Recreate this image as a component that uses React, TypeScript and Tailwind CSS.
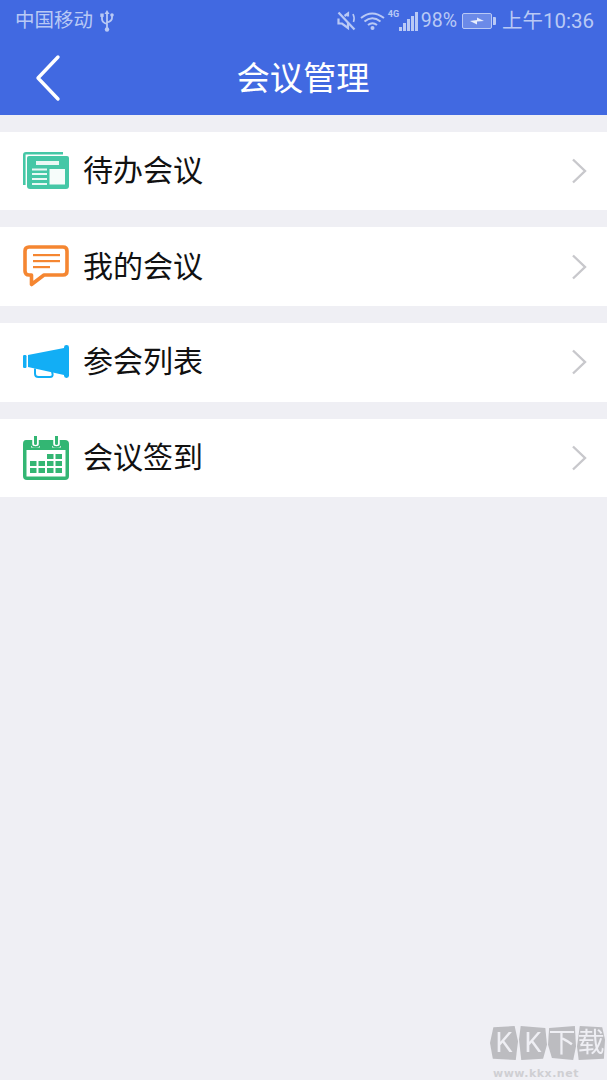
const CJK = "font-['Roboto','Noto_Sans_CJK_SC',sans-serif]";

const NewsIcon = () => (
  <svg width="46" height="38" viewBox="0 0 46 38" className="shrink-0">
    <path d="M0 3Q0 0 3 0H40V2.4H2.6V33H0Z" fill="#45c7a6" />
    <path d="M4 6Q4 4 6 4H44Q46 4 46 6V34Q46 37 43 37H7Q4 37 4 34Z" fill="#45c7a6" />
    <rect x="13" y="9" width="23" height="4" fill="#e9f8f4" />
    <rect x="9" y="16.5" width="15" height="2" fill="#e9f8f4" />
    <rect x="9" y="21" width="15" height="2" fill="#e9f8f4" />
    <rect x="9" y="26" width="15" height="2" fill="#e9f8f4" />
    <rect x="9" y="31" width="15" height="2" fill="#e9f8f4" />
    <rect x="26.5" y="17" width="15.5" height="15.5" fill="#f6fcfa" />
  </svg>
);

const ChatIcon = () => (
  <svg width="46" height="43" viewBox="0 0 46 43" className="shrink-0" fill="none">
    <path
      d="M6 2H40Q44 2 44 6V26Q44 30 40 30H21L8.5 39.5V30H6Q2 30 2 26V6Q2 2 6 2Z"
      stroke="#f58631"
      strokeWidth="3.6"
      strokeLinejoin="round"
    />
    <rect x="10" y="9" width="27" height="2.2" fill="#f58631" />
    <rect x="10" y="15" width="27" height="2.2" fill="#f58631" />
    <rect x="10" y="21" width="17" height="2.2" fill="#f58631" />
  </svg>
);

const HornIcon = () => (
  <svg width="46" height="34" viewBox="0 0 46 34" className="shrink-0">
    <rect x="0" y="10" width="3.5" height="13" rx="1.2" fill="#12aef5" />
    <path d="M5 10L41 3V30L5 22Z" fill="#12aef5" />
    <rect x="41" y="0" width="5" height="33" rx="2.4" fill="#12aef5" />
    <path
      d="M12 23.5V28.5Q12 32 15.5 32H27Q30 32 29.6 29L29 27"
      fill="none"
      stroke="#12aef5"
      strokeWidth="2"
    />
  </svg>
);

const CalendarIcon = () => {
  const cells = [
    [24, 18], [32.5, 18],
    [7, 25], [15.5, 25], [24, 25], [32.5, 25],
    [7, 32], [15.5, 32], [24, 32], [32.5, 32],
  ];
  return (
    <svg width="46" height="44" viewBox="0 0 46 44" className="shrink-0">
      <path d="M3 4H42Q46 4 46 8V40Q46 44 42 44H4Q0 44 0 40V8Q0 4 3 4Z" fill="#33b673" />
      <rect x="3.5" y="14" width="39" height="26.5" fill="#ffffff" />
      <rect x="8" y="4" width="9" height="7.5" fill="#ffffff" />
      <rect x="29" y="4" width="9" height="7.5" fill="#ffffff" />
      <path d="M12.5 0.5V7.5M33.5 0.5V7.5" stroke="#33b673" strokeWidth="3" strokeLinecap="round" />
      <path d="M8.5 4V8Q8.5 11 12.5 11Q16.5 11 16.5 8V4M29.5 4V8Q29.5 11 33.5 11Q37.5 11 37.5 8V4" fill="none" stroke="#33b673" strokeWidth="1.5" />
      {cells.map(([x, y]) => (
        <rect key={`${x}-${y}`} x={x} y={y} width="6.5" height="5" fill="#33b673" />
      ))}
    </svg>
  );
};

const rows = [
  { title: "待办会议", icon: <NewsIcon /> },
  { title: "我的会议", icon: <ChatIcon /> },
  { title: "参会列表", icon: <HornIcon /> },
  { title: "会议签到", icon: <CalendarIcon /> },
];

const StatusBar = () => (
  <div className="flex h-[42px] items-center justify-between pl-[15px] pr-[13px] text-[#b9c9f5]">
    <div className="flex items-center gap-[7px]">
      <span className="text-[19.5px] leading-none">中国移动</span>
      <svg width="14" height="22" viewBox="0 0 14 22" fill="none" stroke="currentColor" strokeWidth="1.8">
        <path d="M7 2V20M2 6V9Q2 12.5 7 14M12 6V8Q12 11 7 12.5" />
        <path d="M7 0L9.5 4H4.5Z" fill="currentColor" stroke="none" />
        <circle cx="7" cy="19.5" r="2.2" fill="currentColor" stroke="none" />
        <rect x="0.3" y="3.5" width="3.4" height="3.4" fill="currentColor" stroke="none" />
        <circle cx="12" cy="5" r="1.8" fill="currentColor" stroke="none" />
      </svg>
    </div>
    <div className="flex items-center">
      <svg width="19" height="20" viewBox="0 0 19 20" fill="none" stroke="currentColor" strokeWidth="2.2">
        <path d="M1.5 1.5L17.5 18.5" />
        <path d="M1.5 7.5V12.5H5L11 17V11M11 5.5V2.5L7.5 5" />
        <path d="M16 3Q18 7 16.5 11" strokeWidth="1.6" />
      </svg>
      <svg width="25" height="20" viewBox="0 0 25 20" fill="none" stroke="currentColor" strokeWidth="2" className="ml-[4px]">
        <path d="M1 7Q12 -2 24 7M4.5 10.5Q12 4 20.5 10.5M8 14Q12.5 10.5 17 14" />
        <circle cx="12.5" cy="17" r="2" fill="currentColor" stroke="none" />
      </svg>
      <div className="relative ml-[3px] flex h-[20px] w-[30px] items-end justify-end gap-[1px]">
        <span className="absolute left-0 top-[-1px] text-[9px] font-bold leading-none">4G</span>
        <span className="h-[4px] w-[3px] bg-[#b9c9f5]" />
        <span className="h-[8px] w-[3px] bg-[#b9c9f5]" />
        <span className="h-[12px] w-[3px] bg-[#b9c9f5]" />
        <span className="h-[15px] w-[3px] bg-[#b9c9f5]" />
        <span className="h-[19px] w-[3px] bg-[#b9c9f5]" />
      </div>
      <span className="ml-[3px] text-[19.5px] leading-none">98%</span>
      <div className="ml-[5px] flex items-center">
        <div className="flex h-[16px] w-[30px] items-center justify-center rounded-[2px] border border-[#b9c9f5] bg-[#a9bcf2]/40">
          <svg width="14" height="8" viewBox="0 0 14 8">
            <path d="M0 4L7 3V0.5L14 4L7 4.5V7.5Z" fill="#e8eefc" />
          </svg>
        </div>
        <div className="ml-[1px] h-[8px] w-[3px] rounded-r-[1px] bg-[#b9c9f5]" />
      </div>
      <span className="ml-[6px] text-[20.5px] leading-none">上午10:36</span>
    </div>
  </div>
);

const stones = [
  "[clip-path:polygon(12%_4%,88%_0,100%_45%,92%_100%,10%_96%,0_50%)]",
  "[clip-path:polygon(6%_0,94%_6%,100%_55%,86%_96%,8%_100%,0_40%)]",
  "[clip-path:polygon(4%_6%,96%_0,100%_60%,90%_100%,14%_94%,0_55%)]",
  "[clip-path:polygon(10%_0,90%_4%,100%_40%,96%_96%,6%_100%,0_60%)]",
];

export default function App() {
  return (
    <div className={`relative flex min-h-[1080px] flex-col bg-[#efeff4] ${CJK}`}>
      <header className="h-[115px] bg-[#4169e1]">
        <StatusBar />
        <div className="relative flex h-[73px] items-center justify-center">
          <svg width="30" height="48" viewBox="0 0 30 48" fill="none" className="absolute left-[33px] top-[12px]">
            <path d="M25 3L5 24L25 45" stroke="#ffffff" strokeWidth="3.4" strokeLinecap="round" strokeLinejoin="round" />
          </svg>
          <h1 className="mr-[1px] text-[33.3px] font-normal leading-none text-white">会议管理</h1>
        </div>
      </header>

      <ul className="mt-[16.6px] flex flex-col gap-[17px]">
        {rows.map((row) => (
          <li key={row.title} className="flex h-[78.7px] items-center bg-white pl-[23px] pr-[20px]">
            <div className="flex w-[46px] justify-center">{row.icon}</div>
            <span className="ml-[14px] flex-1 text-[30px] leading-none text-[#111111]">{row.title}</span>
            <svg width="16" height="26" viewBox="0 0 16 26" fill="none">
              <path d="M2 1.5L14 13L2 24.5" stroke="#c8c8cc" strokeWidth="2.4" />
            </svg>
          </li>
        ))}
      </ul>

      {/* watermark */}
      <div className="absolute bottom-[1px] right-[2px] flex w-[115px] flex-col items-start text-[#cfcfd3]">
        <div className="flex gap-[1px] blur-[0.5px]">
          {["K", "K", "下", "载"].map((ch, i) => (
            <span
              key={i}
              className={`flex h-[34px] w-[28px] items-center justify-center bg-[#bcbcc0] text-[27px] font-normal leading-none text-[#efeff4] ${stones[i]}`}
            >
              {ch}
            </span>
          ))}
        </div>
        <span className="ml-[3px] mt-[8px] font-['DejaVu_Sans',sans-serif] text-[11px] font-bold leading-none tracking-[0.5px]">www.kkx.net</span>
      </div>
    </div>
  );
}
